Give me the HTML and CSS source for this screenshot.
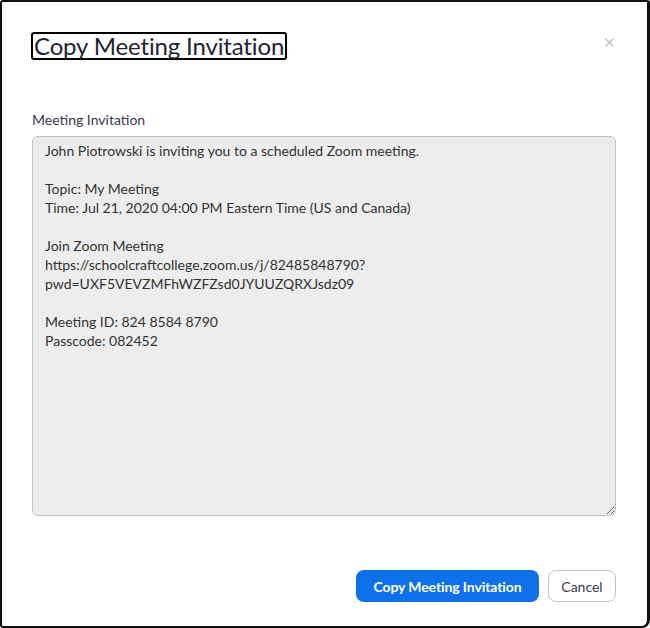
FILE: index.html
```html
<!DOCTYPE html>
<html lang="en">
<head>
    <meta charset="UTF-8">
    <meta name="viewport" content="width=device-width, initial-scale=1.0">
    <title>Copy Meeting Invitation</title>
    <link rel="stylesheet" href="styles.css">
</head>
<body>

    <div class="dialog">
        <!-- header with title and close -->
        <div class="dialog-header">
            <h1 class="dialog-title">Copy Meeting Invitation</h1>
            <span class="close-btn">&times;</span>
        </div>

        <label class="field-label" for="invite">Meeting Invitation</label>
        <textarea id="invite" class="invite-text" readonly>John Piotrowski is inviting you to a scheduled Zoom meeting.

Topic: My Meeting
Time: Jul 21, 2020 04:00 PM Eastern Time (US and Canada)

Join Zoom Meeting
https://schoolcraftcollege.zoom.us/j/82485848790?
pwd=UXF5VEVZMFhWZFZsd0JYUUZQRXJsdz09

Meeting ID: 824 8584 8790
Passcode: 082452</textarea>

        <!-- buttons -->
        <div class="dialog-footer">
            <button class="btn btn-primary">Copy Meeting Invitation</button>
            <button class="btn btn-default">Cancel</button>
        </div>
    </div>

</body>
</html>
```

FILE: styles.css
```css
body {
    margin: 0;
    padding: 0;
    font-family: 'Lato', 'Open Sans', sans-serif;
    background-color: #fff;
}
.dialog {
    width: 650px;
    height: 628px;
    box-sizing: border-box;
    border: 2px solid #111;
    border-right-width: 3px;
    border-radius: 3px 3px 8px 3px;
    background-color: #fff;
    padding: 30px 31px 24px 29px;
    display: flex;
    flex-direction: column;
}
.dialog-header {
    display: flex;
    justify-content: space-between;
    align-items: flex-start;
    height: 28px;
}
.dialog-title {
    margin: 0;
    font-size: 24px;
    font-weight: 400;
    line-height: 24px;
    color: #232333;
    border: 2px solid #000;
    border-radius: 3px;
    padding: 0 1px 0 1px;
    white-space: nowrap;
    letter-spacing: -0.15px;
}
.close-btn {
    color: #c4c4c4;
    font-size: 20px;
    line-height: 20px;
    margin-top: -1px;
    margin-right: 1px;
}
.field-label {
    margin-top: 51px;
    margin-left: 1px;
    font-size: 14px;
    line-height: 18px;
    color: #39394d;
}
.invite-text {
    margin-top: 7px;
    margin-left: 1px;
    height: 380px;
    box-sizing: border-box;
    padding: 4px 12px;
    font-family: 'Lato', 'Open Sans', sans-serif;
    font-size: 14px;
    line-height: 19px;
    color: #333;
    background-color: #ededed;
    border: 1px solid #c1c1c1;
    border-radius: 6px;
    resize: vertical;
    outline: none;
}
.dialog-footer {
    margin-top: auto;
    display: flex;
    justify-content: flex-end;
    gap: 9px;
}
.btn {
    height: 32px;
    border-radius: 8px;
    font-family: 'Lato', 'Open Sans', sans-serif;
    font-size: 14px;
    cursor: pointer;
}
.btn-primary {
    width: 183px;
    background-color: #0e71eb;
    color: #fff;
    font-weight: 700;
    border: none;
    letter-spacing: -0.1px;
}
.btn-default {
    width: 68px;
    background-color: #fff;
    color: #39394d;
    border: 1px solid #c1c1c1;
}
```
